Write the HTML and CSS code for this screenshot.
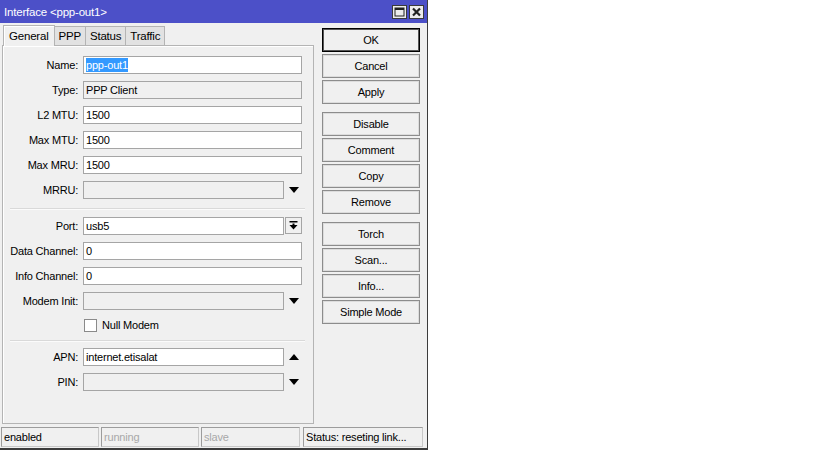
FILE: index.html
```html
<!DOCTYPE html>
<html>
<head>
<meta charset="utf-8">
<title>Interface &lt;ppp-out1&gt;</title>
<link rel="stylesheet" href="styles.css">
</head>
<body>
<div class="window">
  <div class="titlebar">
    <span class="title">Interface &lt;ppp-out1&gt;</span>
    <div class="tbuttons">
      <span class="tbtn"><svg width="11" height="10" viewBox="0 0 11 10"><rect x="1" y="1" width="9" height="8" fill="none" stroke="#222" stroke-width="1"/><rect x="1" y="1" width="9" height="2" fill="#222"/></svg></span>
      <span class="tbtn"><svg width="11" height="10" viewBox="0 0 11 10"><path d="M2 1.5 L9 8.5 M9 1.5 L2 8.5" stroke="#222" stroke-width="2.2"/></svg></span>
    </div>
  </div>
  <div class="main">
    <div class="left">
      <div class="tabs">
        <span class="tab active">General</span>
        <span class="tab">PPP</span>
        <span class="tab">Status</span>
        <span class="tab">Traffic</span>
      </div>
      <div class="panel">
        <div class="row"><span class="label">Name:</span><span class="field full"><span class="sel">ppp-out1</span></span></div>
        <div class="row"><span class="label">Type:</span><span class="field full ro">PPP Client</span></div>
        <div class="row"><span class="label">L2 MTU:</span><span class="field full">1500</span></div>
        <div class="row"><span class="label">Max MTU:</span><span class="field full">1500</span></div>
        <div class="row"><span class="label">Max MRU:</span><span class="field full">1500</span></div>
        <div class="row"><span class="label">MRRU:</span><span class="field short ro"></span><span class="arrow"><svg width="10" height="6" viewBox="0 0 10 6"><path d="M0 0 H10 L5 6 Z" fill="#000"/></svg></span></div>
        <div class="sep sep1"></div>
        <div class="row"><span class="label">Port:</span><span class="field short">usb5</span><span class="arrowbtn"><svg width="9" height="9" viewBox="0 0 9 9"><rect x="0.5" y="0" width="8" height="1.5" fill="#000"/><rect x="3.5" y="2.5" width="2" height="2" fill="#000"/><path d="M0.5 4 H8.5 L4.5 8.5 Z" fill="#000"/></svg></span></div>
        <div class="row"><span class="label">Data Channel:</span><span class="field full">0</span></div>
        <div class="row"><span class="label">Info Channel:</span><span class="field full">0</span></div>
        <div class="row"><span class="label">Modem Init:</span><span class="field short ro"></span><span class="arrow"><svg width="10" height="6" viewBox="0 0 10 6"><path d="M0 0 H10 L5 6 Z" fill="#000"/></svg></span></div>
        <div class="row check"><span class="box"></span><span>Null Modem</span></div>
        <div class="sep sep2"></div>
        <div class="row"><span class="label">APN:</span><span class="field short">internet.etisalat</span><span class="arrow"><svg width="10" height="6" viewBox="0 0 10 6"><path d="M0 6 H10 L5 0 Z" fill="#000"/></svg></span></div>
        <div class="row"><span class="label">PIN:</span><span class="field short ro"></span><span class="arrow"><svg width="10" height="6" viewBox="0 0 10 6"><path d="M0 0 H10 L5 6 Z" fill="#000"/></svg></span></div>
      </div>
    </div>
    <div class="right">
      <div class="group">
        <span class="btn default">OK</span>
        <span class="btn">Cancel</span>
        <span class="btn">Apply</span>
      </div>
      <div class="group">
        <span class="btn">Disable</span>
        <span class="btn">Comment</span>
        <span class="btn">Copy</span>
        <span class="btn">Remove</span>
      </div>
      <div class="group">
        <span class="btn">Torch</span>
        <span class="btn">Scan...</span>
        <span class="btn">Info...</span>
        <span class="btn">Simple Mode</span>
      </div>
    </div>
  </div>
  <div class="statusbar">
    <span class="cell c1">enabled</span>
    <span class="cell c2 dim">running</span>
    <span class="cell c3 dim">slave</span>
    <span class="cell c4">Status: reseting link...</span>
  </div>
</div>
</body>
</html>
```

FILE: styles.css
```css
* { box-sizing: border-box; }
html, body { margin: 0; padding: 0; background: #ffffff; }
body {
  font-family: "Liberation Sans", Arial, sans-serif;
  font-size: 11px;
  letter-spacing: -0.2px;
  color: #000;
}
.window {
  width: 428px;
  height: 450px;
  background: #f0f0f0;
  border-right: 1px solid #3c3c3c;
  border-bottom: 2px solid #3c3c3c;
  display: flex;
  flex-direction: column;
}
.titlebar {
  height: 23px;
  background: #4c50c8;
  display: flex;
  align-items: center;
  justify-content: space-between;
  padding: 0 3px 0 4px;
}
.title { color: #fff; font-size: 11.5px; letter-spacing: -0.2px; }
.tbuttons { display: flex; gap: 2px; }
.tbtn {
  width: 15px;
  height: 14px;
  background: #ececec;
  border: 1px solid #3a3a3a;
  display: flex;
  align-items: center;
  justify-content: center;
}
.main {
  display: flex;
  height: 401px;
  padding-top: 2px;
  padding-left: 2px;
}
.left { width: 312px; display: flex; flex-direction: column; }
.tabs { display: flex; align-items: flex-end; height: 20px; padding-left: 1px; position: relative; z-index: 1; }
.tab {
  height: 19px;
  border: 1px solid #b4b4b4;
  border-bottom: none;
  background: #e2e2e2;
  display: flex;
  align-items: center;
  padding: 0 4px;
  margin-left: -1px;
  font-size: 11.5px;
}
.tab.active {
  height: 21px;
  margin-bottom: -1px;
  background: #f0f0f0;
  padding: 0 5px;
  margin-left: 0;
  border-color: #b4b4b4;
  box-shadow: inset 1px 1px 0 #ffffff;
}
.panel {
  height: 379px;
  border: 1px solid #b4b4b4;
  box-shadow: inset 1px 1px 0 #ffffff;
  padding-top: 6px;
  display: flex;
  flex-direction: column;
}
.row { display: flex; align-items: center; height: 25px; flex: none; }
.label { width: 75px; text-align: right; margin-right: 5px; }
.field {
  height: 18px;
  background: #ffffff;
  border: 1px solid #a5a5a5;
  display: flex;
  align-items: center;
  padding-left: 2px;
  white-space: nowrap;
  overflow: hidden;
}
.field.full { width: 219px; }
.field.short { width: 201px; }
.field.ro { background: #f0f0f0; }
.sel { background: #3399ff; color: #fff; padding: 1px 0; }
.arrow { width: 18px; display: flex; justify-content: center; align-items: center; padding-left: 1px; }
.arrowbtn {
  width: 17px;
  height: 17px;
  margin-left: 1px;
  border: 1px solid #a5a5a5;
  background: #f0f0f0;
  display: flex;
  justify-content: center;
  align-items: center;
}
.sep {
  height: 2px;
  border-top: 1px solid #d9d9d9;
  border-bottom: 1px solid #fbfbfb;
  margin-left: 7px;
  margin-right: 8px;
  flex: none;
}
.sep1 { margin-top: 6px; margin-bottom: 3px; }
.sep2 { margin-top: 3px; margin-bottom: 2px; }
.row.check { height: 24px; padding-left: 81px; gap: 5px; }
.box { width: 13px; height: 13px; background: #fff; border: 1px solid #8a8a8a; }
.right {
  width: 98px;
  margin-left: 8px;
  padding-top: 3px;
  display: flex;
  flex-direction: column;
  gap: 8px;
}
.group { display: flex; flex-direction: column; gap: 2px; }
.btn {
  height: 24px;
  border: 1px solid #8c8c8c;
  box-shadow: inset 0 0 0 1px #dcdcdc;
  background: #f0f0f0;
  display: flex;
  align-items: center;
  justify-content: center;
}
.btn.default { border-color: #000; box-shadow: inset 0 0 0 1px #555; }
.statusbar {
  display: flex;
  height: 21px;
  margin-top: 3px;
  padding-left: 1px;
  gap: 2px;
}
.cell {
  height: 20px;
  border: 1px solid #c8c8c8;
  border-top-color: #9c9c9c;
  border-left-color: #9c9c9c;
  display: flex;
  align-items: center;
  padding-left: 2px;
  white-space: nowrap;
}
.c1 { width: 98px; }
.c2 { width: 98px; }
.c3 { width: 99px; }
.c4 { width: 120px; margin-left: 1px; }
.dim { color: #a8a8a8; }
```
